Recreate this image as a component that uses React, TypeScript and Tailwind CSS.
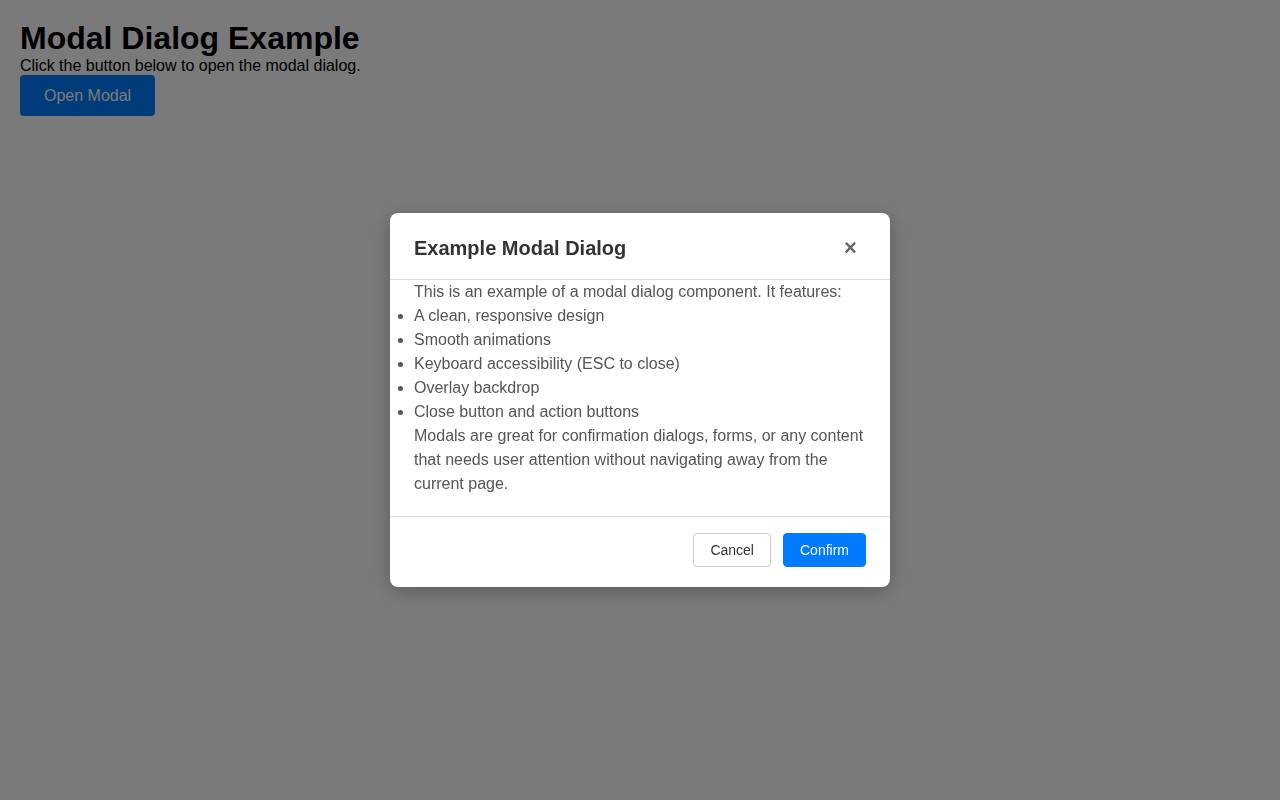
import React from "react";

const features = [
  "A clean, responsive design",
  "Smooth animations",
  "Keyboard accessibility (ESC to close)",
  "Overlay backdrop",
  "Close button and action buttons",
];

export default function App() {
  return (
    <div className="relative min-h-[800px] bg-white p-5 font-['Liberation_Sans',Arial,sans-serif] text-black">
      <h1 className="m-0 text-[32px] font-bold leading-[37px]">Modal Dialog Example</h1>
      <p className="m-0 text-base leading-[18px]">Click the button below to open the modal dialog.</p>
      <button className="h-[41px] rounded bg-[#007bff] px-6 text-base text-white">Open Modal</button>

      {/* overlay */}
      <div className="fixed inset-0 flex items-center justify-center bg-black/[0.52]">
        <div className="w-[500px] rounded-lg bg-white shadow-[0_4px_20px_rgba(0,0,0,0.25)]">
          <div className="flex items-center justify-between border-b border-[#dddddd] px-6 pb-[18px] pt-[22px]">
            <h2 className="m-0 text-[20px] font-bold leading-[23px] text-[#333333]">Example Modal Dialog</h2>
            <button className="flex h-[26px] w-[31px] items-center justify-center text-[22px] font-bold leading-none text-[#666666]">
              ×
            </button>
          </div>
          <div className="px-6 pb-5 text-base leading-6 text-[#555555]">
            <p className="m-0">This is an example of a modal dialog component. It features:</p>
            <ul className="m-0 list-outside list-disc pl-0">
              {features.map((f) => (
                <li key={f}>{f}</li>
              ))}
            </ul>
            <p className="m-0">
              Modals are great for confirmation dialogs, forms, or any content that needs user attention without
              navigating away from the current page.
            </p>
          </div>
          <div className="flex justify-end gap-3 border-t border-[#dddddd] px-6 pb-5 pt-4">
            <button className="h-[34px] rounded border border-[#cccccc] bg-white px-4 text-sm text-[#333333]">
              Cancel
            </button>
            <button className="h-[34px] rounded border border-[#007bff] bg-[#007bff] px-4 text-sm text-white">
              Confirm
            </button>
          </div>
        </div>
      </div>
    </div>
  );
}
